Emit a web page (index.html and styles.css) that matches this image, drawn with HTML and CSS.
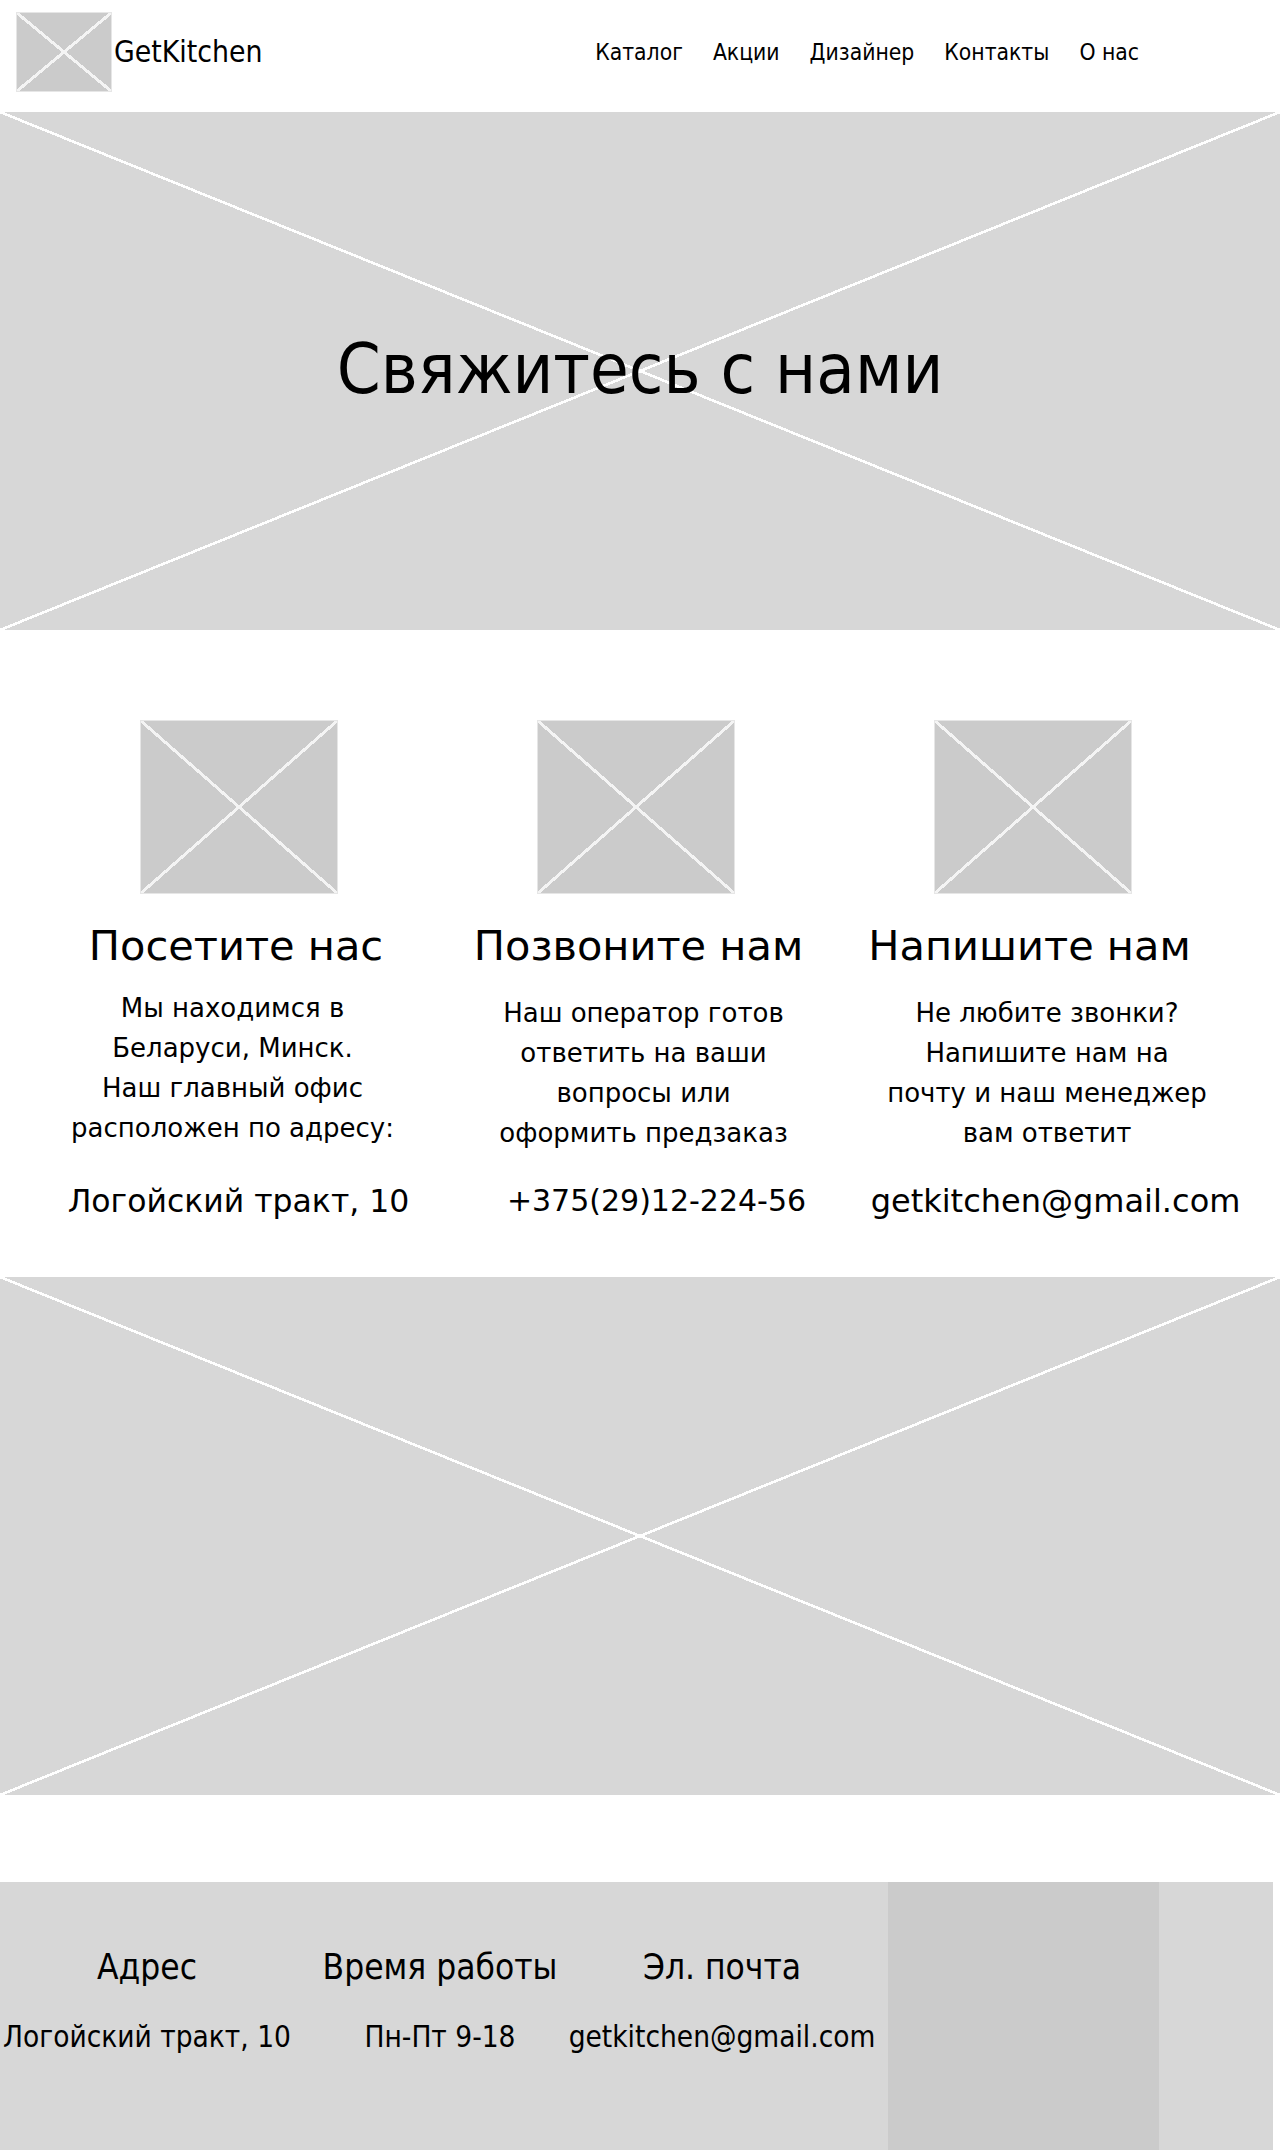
FILE: index.html
```html
<!DOCTYPE html>
<html lang="ru">
<head>
<meta charset="utf-8">
<title>GetKitchen — Контакты</title>
<link rel="stylesheet" href="styles.css">
</head>
<body>
<header class="header">
  <div class="ph logo"></div>
  <div class="brand">GetKitchen</div>
  <nav class="nav">
    <a href="#">Каталог</a>
    <a href="#">Акции</a>
    <a href="#">Дизайнер</a>
    <a href="#">Контакты</a>
    <a href="#">О нас</a>
  </nav>
</header>

<section class="hero ph-wide">
  <h1 class="hero-title">Свяжитесь с нами</h1>
</section>

<section class="contacts">
  <div class="col col-1">
    <div class="ph icon"></div>
    <h2 class="col-title">Посетите нас</h2>
    <p class="col-text">Мы находимся в<br>Беларуси, Минск.<br>Наш главный офис<br>расположен по адресу:</p>
    <div class="col-value">Логойский тракт, 10</div>
  </div>
  <div class="col col-2">
    <div class="ph icon"></div>
    <h2 class="col-title">Позвоните нам</h2>
    <p class="col-text">Наш оператор готов<br>ответить на ваши<br>вопросы или<br>оформить предзаказ</p>
    <div class="col-value">+375(29)12-224-56</div>
  </div>
  <div class="col col-3">
    <div class="ph icon"></div>
    <h2 class="col-title">Напишите нам</h2>
    <p class="col-text">Не любите звонки?<br>Напишите нам на<br>почту и наш менеджер<br>вам ответит</p>
    <div class="col-value">getkitchen@gmail.com</div>
  </div>
</section>

<section class="map ph-wide"></section>

<footer class="footer">
  <div class="f-col f-addr">
    <div class="f-title">Адрес</div>
    <div class="f-value">Логойский тракт, 10</div>
  </div>
  <div class="f-col f-time">
    <div class="f-title">Время работы</div>
    <div class="f-value">Пн-Пт 9-18</div>
  </div>
  <div class="f-col f-mail">
    <div class="f-title">Эл. почта</div>
    <div class="f-value">getkitchen@gmail.com</div>
  </div>
  <div class="f-block"></div>
</footer>
</body>
</html>
```

FILE: styles.css
```css
* { box-sizing: border-box; }

html, body {
  margin: 0;
  padding: 0;
  background: #ffffff;
}

body {
  font-family: "DejaVu Sans", Verdana, sans-serif;
  color: #000000;
  width: 1280px;
}

/* placeholder crosses */
.ph {
  background-color: #cbcbcb;
  background-image:
    linear-gradient(to top right, transparent calc(50% - 1.5px), #f4f4f4 calc(50% - 1.5px), #f4f4f4 calc(50% + 1.5px), transparent calc(50% + 1.5px)),
    linear-gradient(to bottom right, transparent calc(50% - 1.5px), #f4f4f4 calc(50% - 1.5px), #f4f4f4 calc(50% + 1.5px), transparent calc(50% + 1.5px));
  border: 1px solid #e6e6e6;
}

.ph-wide {
  background-color: #d7d7d7;
  background-image:
    linear-gradient(to top right, transparent calc(50% - 1.3px), #ffffff calc(50% - 1.3px), #ffffff calc(50% + 1.3px), transparent calc(50% + 1.3px)),
    linear-gradient(to bottom right, transparent calc(50% - 1.3px), #ffffff calc(50% - 1.3px), #ffffff calc(50% + 1.3px), transparent calc(50% + 1.3px));
}

/* header */
.header {
  display: flex;
  align-items: flex-start;
  height: 112px;
  padding: 12px 0 0 16px;
}

.logo {
  width: 96px;
  height: 80px;
  flex: none;
}

.brand {
  font-family: "DejaVu Sans Condensed", "DejaVu Sans", sans-serif;
  font-stretch: condensed;
  font-size: 29.8px;
  line-height: 34px;
  padding-top: 23px;
  margin-left: 2px;
}

.nav {
  display: flex;
  gap: 30px;
  margin-left: auto;
  margin-right: 141px;
  padding-top: 26px;
}

.nav a {
  font-family: "DejaVu Sans Condensed", "DejaVu Sans", sans-serif;
  font-stretch: condensed;
  color: #000000;
  text-decoration: none;
  font-size: 22.7px;
  line-height: 28px;
}

/* hero */
.hero {
  height: 518px;
  display: flex;
  align-items: center;
  justify-content: center;
}

.hero-title {
  margin: 0;
  font-family: "DejaVu Sans Condensed", "DejaVu Sans", sans-serif;
  font-stretch: condensed;
  font-weight: normal;
  font-size: 70px;
  line-height: 70px;
  padding-bottom: 4px;
}

/* contacts */
.contacts {
  display: grid;
  grid-template-columns: repeat(3, 397px);
  padding: 90px 0 0 40px;
}

.col {
  display: flex;
  flex-direction: column;
  align-items: center;
  text-align: center;
}

.icon {
  width: 198px;
  height: 174px;
}

.col-title {
  margin: 28px 0 0;
  font-weight: normal;
  font-size: 41.5px;
  line-height: 48px;
  white-space: nowrap;
}

.col-text {
  margin: 18px 0 0;
  font-size: 26px;
  line-height: 40px;
  white-space: nowrap;
}

.col-value {
  margin-top: 33px;
  font-size: 31.5px;
  line-height: 40px;
  white-space: nowrap;
}

.col-1 .col-title { margin-right: 5px; }
.col-1 .col-text { margin-right: 12px; }

.col-2 .col-title { margin-left: 6px; }
.col-2 .col-text { padding-top: 5px; margin-left: 16px; }
.col-2 .col-value { margin-top: 28px; margin-left: 42px; font-size: 30px; }

.col-3 .col-title { margin-left: -6px; }
.col-3 .col-text { padding-top: 5px; margin-left: 29px; }
.col-3 .col-value { margin-top: 28px; margin-left: 46px; font-size: 32px; }

/* map */
.map {
  height: 518px;
  margin-top: 56px;
}

/* footer */
.footer {
  display: flex;
  width: 1273px;
  height: 268px;
  margin-top: 87px;
  background: #d7d7d7;
}

.f-col {
  display: flex;
  flex-direction: column;
  align-items: center;
  text-align: center;
  padding-top: 65px;
  white-space: nowrap;
  font-family: "DejaVu Sans Condensed", "DejaVu Sans", sans-serif;
  font-stretch: condensed;
}

.f-addr { width: 294px; }
.f-time { width: 292px; }
.f-mail { width: 272px; }

.f-title {
  font-size: 35px;
  line-height: 40px;
}

.f-value {
  margin-top: 33px;
  font-size: 29.5px;
  line-height: 34px;
}

.f-block {
  width: 271px;
  margin-left: 30px;
  background: #cbcbcb;
}
```
